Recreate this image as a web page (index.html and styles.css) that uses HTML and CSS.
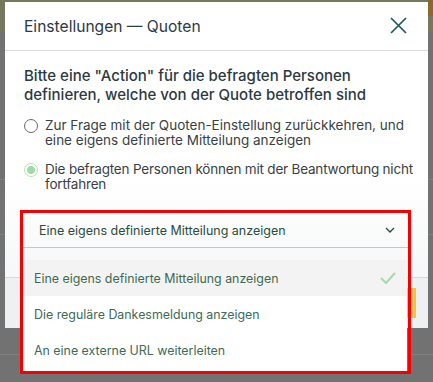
FILE: index.html
```html
<!DOCTYPE html>
<html lang="de">
<head>
<meta charset="utf-8">
<link rel="stylesheet" href="styles.css">
</head>
<body>
<div class="page">
  <div class="page-top"><span class="page-mark"></span></div>
  <div class="page-row r1"></div>
  <div class="page-row r2"></div>
  <div class="page-row r3"></div>
</div>
<div class="modal">
  <div class="modal-header">
    <h1 class="modal-title">Einstellungen — Quoten</h1>
    <button class="close-btn" aria-label="Schließen">
      <svg width="17" height="17" viewBox="0 0 17 17"><path d="M1 1 L16 16 M16 1 L1 16" stroke="#22585e" stroke-width="1.7" fill="none"/></svg>
    </button>
  </div>
  <div class="modal-body">
    <p class="question">Bitte eine "Action" für die befragten Personen definieren, welche von der Quote betroffen sind</p>
    <label class="radio">
      <span class="radio-dot"></span>
      <span class="radio-text">Zur Frage mit der Quoten-Einstellung zurückkehren, und<br>eine eigens definierte Mitteilung anzeigen</span>
    </label>
    <label class="radio checked">
      <span class="radio-dot"></span>
      <span class="radio-text">Die befragten Personen können mit der Beantwortung nicht<br>fortfahren</span>
    </label>
  </div>
  <div class="modal-footer">
    <button class="primary-btn">Speichern</button>
  </div>
  <div class="dropdown">
    <div class="dropdown-field">
      <span>Eine eigens definierte Mitteilung anzeigen</span>
      <svg width="10" height="6" viewBox="0 0 10 6"><path d="M1 1 L5 5 L9 1" stroke="#2c4a3c" stroke-width="1.3" fill="none"/></svg>
    </div>
    <ul class="dropdown-menu">
      <li class="option selected">Eine eigens definierte Mitteilung anzeigen
        <svg width="16" height="12" viewBox="0 0 16 12"><path d="M1 6 L6 11 L15 1" stroke="#a4dca6" stroke-width="2" fill="none"/></svg>
      </li>
      <li class="option">Die reguläre Dankesmeldung anzeigen</li>
      <li class="option">An eine externe URL weiterleiten</li>
    </ul>
  </div>
</div>
</body>
</html>
```

FILE: styles.css
```css
* { box-sizing: border-box; }
html, body { margin: 0; padding: 0; }
body {
  width: 433px;
  height: 382px;
  overflow: hidden;
  position: relative;
  background: #727272;
  font-family: Inter, "Noto Sans", "DejaVu Sans", sans-serif;
}
.page { height: 382px; }
.page-top {
  height: 32px;
  background: #77775e;
  display: flex;
  justify-content: flex-end;
}
.page-mark {
  width: 5px;
  height: 16px;
  background: #8a6a2c;
}
.page-row { border-bottom: 1px solid #808080; }
.r1 { height: 148px; }
.r2 { height: 55px; }
.r3 { height: 120px; }

.modal {
  position: absolute;
  left: 5px;
  top: 2px;
  width: 423px;
  height: 326px;
  background: #fff;
  display: flex;
  flex-direction: column;
}
.modal-header {
  height: 49px;
  flex: none;
  border-bottom: 1px solid #dcdcdc;
  display: flex;
  align-items: center;
  justify-content: space-between;
  padding: 0 21px 0 19px;
}
.modal-title {
  margin: 0;
  font-size: 15.6px;
  font-weight: 400;
  color: #2b3a44;
}
.close-btn {
  border: 0;
  background: none;
  padding: 0;
  display: flex;
  margin-top: -2px;
}
.modal-body {
  flex: 1;
  padding: 15px 6px 0 19px;
  background: linear-gradient(#fff 0, #fff 130px, #f6f7f8 226px);
}
.question {
  margin: 0 0 14px;
  font-size: 15px;
  font-weight: 500;
  line-height: 19px;
  color: #2b3a3f;
}
.radio {
  display: flex;
  align-items: flex-start;
  gap: 7px;
  margin-bottom: 14px;
}
.radio-dot {
  width: 14px;
  height: 14px;
  flex: none;
  border: 1.3px solid #6b6b6b;
  border-radius: 50%;
  margin-top: 1px;
  background: #fff;
}
.radio.checked .radio-dot {
  border-color: #b6e3b8;
  background: radial-gradient(circle, #9edca2 0 3.6px, #fff 4.4px);
}
.radio-text {
  font-size: 13.5px;
  line-height: 15px;
  color: #3a3f44;
  white-space: nowrap;
}
.radio.checked .radio-text { letter-spacing: -0.2px; }
.modal-footer {
  height: 51px;
  flex: none;
  border-top: 1px solid #d8d8d8;
  background: #eff0f2;
  display: flex;
  align-items: center;
  justify-content: flex-end;
  padding-right: 12px;
}
.primary-btn {
  height: 30px;
  width: 90px;
  border: 0;
  background: #f0c050;
  color: #fff;
  font-family: inherit;
}

.dropdown {
  position: absolute;
  left: 15px;
  top: 208px;
  width: 391px;
  border: 3px solid #f50000;
  background: transparent;
}
.dropdown-field {
  height: 35px;
  border-bottom: 1px solid #a6dca8;
  display: flex;
  align-items: center;
  justify-content: space-between;
  padding: 0 13px 0 16px;
  font-size: 12.5px;
  color: #2b4d3e;
}
.dropdown-menu {
  list-style: none;
  margin: 12px 0 0;
  padding: 0 0 3px;
  background: #fff;
  width: 384px;
}
.option {
  height: 36px;
  display: flex;
  align-items: center;
  justify-content: space-between;
  padding: 0 11px 0 11px;
  font-size: 12.4px;
  color: #3e6a53;
}
.option.selected { background: #f3f3f3; }
```
